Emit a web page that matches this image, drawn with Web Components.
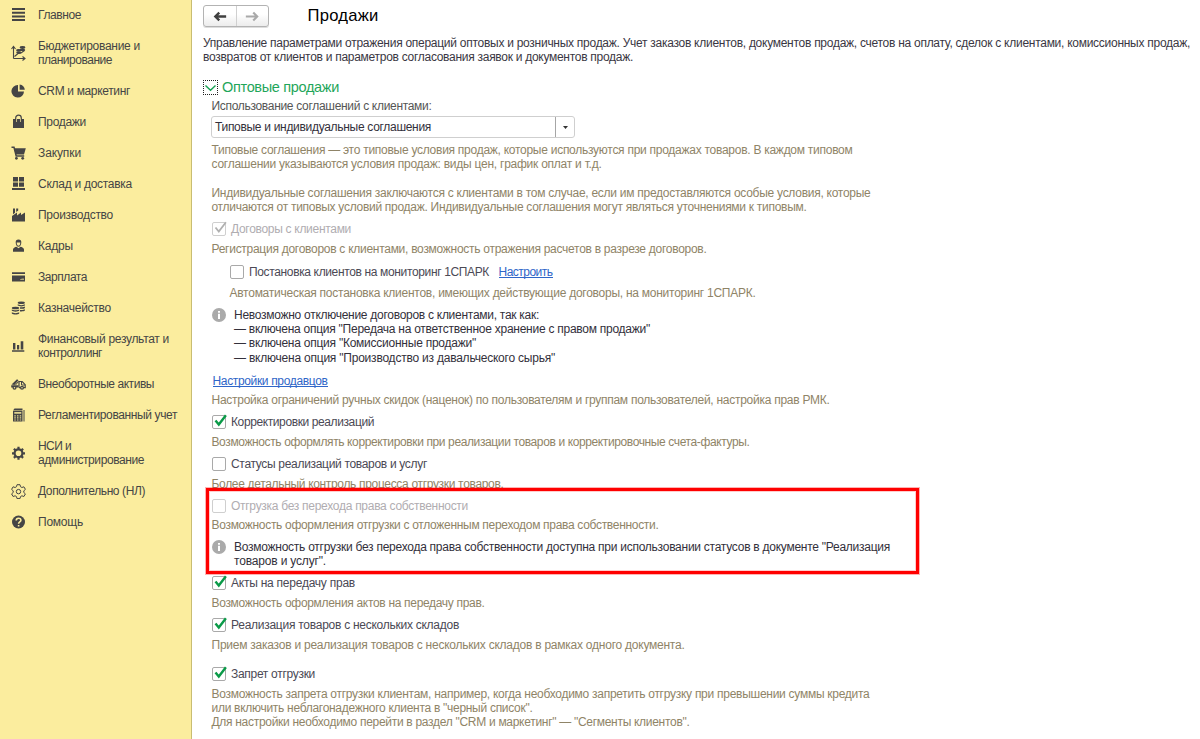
<!DOCTYPE html>
<html lang="ru">
<head>
<meta charset="UTF-8">
<title>Продажи</title>
<style>
    body {
        margin: 0;
        background: #fff;
        color: #3a3743;
        font: 12px/14.2px "Liberation Sans", Arial, sans-serif;
    }
</style>
</head>
<body>
<app-shell>
    <side-menu slot="menu">
        <menu-item icon="list"><fit-text w="43">Главное</fit-text></menu-item>
        <menu-item icon="budget"><fit-text w="102">Бюджетирование и</fit-text><fit-text w="74">планирование</fit-text></menu-item>
        <menu-item icon="pie"><fit-text w="92">CRM и маркетинг</fit-text></menu-item>
        <menu-item icon="bag"><fit-text w="48">Продажи</fit-text></menu-item>
        <menu-item icon="cart"><fit-text w="43">Закупки</fit-text></menu-item>
        <menu-item icon="store"><fit-text w="94">Склад и доставка</fit-text></menu-item>
        <menu-item icon="factory"><fit-text w="75">Производство</fit-text></menu-item>
        <menu-item icon="person"><fit-text w="35">Кадры</fit-text></menu-item>
        <menu-item icon="card"><fit-text w="49">Зарплата</fit-text></menu-item>
        <menu-item icon="coins"><fit-text w="73">Казначейство</fit-text></menu-item>
        <menu-item icon="bars"><fit-text w="131">Финансовый результат и</fit-text><fit-text w="64">контроллинг</fit-text></menu-item>
        <menu-item icon="truck"><fit-text w="116">Внеоборотные активы</fit-text></menu-item>
        <menu-item icon="calc"><fit-text w="139">Регламентированный учет</fit-text></menu-item>
        <menu-item icon="gear"><fit-text w="33">НСИ и</fit-text><fit-text w="106">администрирование</fit-text></menu-item>
        <menu-item icon="gear-line"><fit-text w="107">Дополнительно (НЛ)</fit-text></menu-item>
        <menu-item icon="help"><fit-text w="45">Помощь</fit-text></menu-item>
    </side-menu>

    <page-header><fit-text w="71">Продажи</fit-text></page-header>
    <text-block style="--gap: 9px; --indent: 0px">
        <fit-text w="987">Управление параметрами отражения операций оптовых и розничных продаж. Учет заказов клиентов, документов продаж, счетов на оплату, сделок с клиентами, комиссионных продаж,</fit-text>
        <fit-text w="430">возвратов от клиентов и параметров согласования заявок и документов продаж.</fit-text>
    </text-block>
    <group-title><fit-text w="117">Оптовые продажи</fit-text></group-title>
    <text-block style="--gap: 3.5px; color: #555">
        <fit-text w="220">Использование соглашений с клиентами:</fit-text>
    </text-block>
    <combo-box><fit-text w="216">Типовые и индивидуальные соглашения</fit-text></combo-box>
    <text-block hint style="--gap: 5px">
        <fit-text w="641">Типовые соглашения — это типовые условия продаж, которые используются при продажах товаров. В каждом типовом</fit-text>
        <fit-text w="390">соглашении указываются условия продаж: виды цен, график оплат и т.д.</fit-text>
    </text-block>
    <text-block hint style="--gap: 14.2px">
        <fit-text w="659">Индивидуальные соглашения заключаются с клиентами в том случае, если им предоставляются особые условия, которые</fit-text>
        <fit-text w="595">отличаются от типовых условий продаж. Индивидуальные соглашения могут являться уточнениями к типовым.</fit-text>
    </text-block>
    <check-option checked disabled><fit-text w="120">Договоры с клиентами</fit-text></check-option>
    <text-block hint><fit-text w="495">Регистрация договоров с клиентами, возможность отражения расчетов в разрезе договоров.</fit-text></text-block>
    <check-option style="--gap: 9px; --indent: 27px">
        <fit-text w="240">Постановка клиентов на мониторинг 1СПАРК</fit-text>
        <text-link slot="extra"><fit-text w="54">Настроить</fit-text></text-link>
    </check-option>
    <text-block hint style="--gap: 7px; --indent: 26.5px"><fit-text w="526">Автоматическая постановка клиентов, имеющих действующие договоры, на мониторинг 1СПАРК.</fit-text></text-block>
    <info-note>
        <fit-text w="305">Невозможно отключение договоров с клиентами, так как:</fit-text>
        <fit-text w="416">— включена опция "Передача на ответственное хранение с правом продажи"</fit-text>
        <fit-text w="242">— включена опция "Комиссионные продажи"</fit-text>
        <fit-text w="321">— включена опция "Производство из давальческого сырья"</fit-text>
    </info-note>
    <text-block style="--gap: 9.2px; --indent: 9.5px"><text-link><fit-text w="115">Настройки продавцов</fit-text></text-link></text-block>
    <text-block hint style="--gap: 5.2px"><fit-text w="618">Настройка ограничений ручных скидок (наценок) по пользователям и группам пользователей, настройка прав РМК.</fit-text></text-block>
    <check-option checked><fit-text w="143">Корректировки реализаций</fit-text></check-option>
    <text-block hint><fit-text w="538">Возможность оформлять корректировки при реализации товаров и корректировочные счета-фактуры.</fit-text></text-block>
    <check-option><fit-text w="196">Статусы реализаций товаров и услуг</fit-text></check-option>
    <text-block hint><fit-text w="292">Более детальный контроль процесса отгрузки товаров.</fit-text></text-block>
    <highlight-area>
        <check-option disabled><fit-text w="237">Отгрузка без перехода права собственности</fit-text></check-option>
        <text-block hint style="--gap: 5px"><fit-text w="447">Возможность оформления отгрузки с отложенным переходом права собственности.</fit-text></text-block>
        <info-note>
            <fit-text w="656">Возможность отгрузки без перехода права собственности доступна при использовании статусов в документе "Реализация</fit-text>
            <fit-text w="92">товаров и услуг".</fit-text>
        </info-note>
    </highlight-area>
    <check-option checked style="--gap: 8px"><fit-text w="124">Акты на передачу прав</fit-text></check-option>
    <text-block hint><fit-text w="273">Возможность оформления актов на передачу прав.</fit-text></text-block>
    <check-option checked><fit-text w="228">Реализация товаров с нескольких складов</fit-text></check-option>
    <text-block hint><fit-text w="473">Прием заказов и реализация товаров с нескольких складов в рамках одного документа.</fit-text></text-block>
    <check-option checked style="--gap: 14.8px"><fit-text w="84">Запрет отгрузки</fit-text></check-option>
    <text-block hint>
        <fit-text w="658">Возможность запрета отгрузки клиентам, например, когда необходимо запретить отгрузку при превышении суммы кредита</fit-text>
        <fit-text w="321">или включить неблагонадежного клиента в "черный список".</fit-text>
        <fit-text w="478">Для настройки необходимо перейти в раздел "CRM и маркетинг" — "Сегменты клиентов".</fit-text>
    </text-block>
</app-shell>

<script>
// 16x16 section icons
const ICONS = {
    list: `<path d="M2 1h13v2H2zM2 4.700h13v2H2zM2 8.400h13v2H2zM2 12.100h13v2H2z"/>`,
    budget: `<path d="M3.500 13.500V1.500M1.500 4l2-2.500 2 2.500M3.500 13.500h11M12.500 11.500l2.500 2-2.500 2M4.500 11.500l3.500-3 3-.5 3.500-2.500" fill="none" stroke="currentColor" stroke-width="1.100"/><ellipse cx="12.500" cy="2.500" rx="2.900" ry="1.400"/><ellipse cx="12.300" cy="4.900" rx="2.900" ry="1.200"/><ellipse cx="8.700" cy="5.300" rx="2.600" ry="1.300"/><ellipse cx="8.700" cy="7.500" rx="2.500" ry="1.200"/>`,
    pie: `<path d="M8 2v6.500h6A6.300 6.300 0 1 1 8 2z"/><path d="M9.600 1.500a6 6 0 0 1 5.200 5.300H9.600z"/>`,
    bag: `<path d="M3 5h11v9H3z"/><path d="M5.700 7.500V4a2.800 2.800 0 0 1 5.600 0v3.500" fill="none" stroke="currentColor" stroke-width="1.200"/><path d="M6.500 5v3M10.500 5v3" stroke="#fbed9e" stroke-width=".7"/>`,
    cart: `<path d="M1.500 2.300h2.500l2.200 8.700h8" fill="none" stroke="currentColor" stroke-width="1.500"/><path d="M4 3.300H15.800L14 9.500H5.700z"/><circle cx="6.400" cy="13.300" r="1.400"/><circle cx="12.700" cy="13.300" r="1.400"/>`,
    store: `<path d="M3 1h5v4.600H3zM9 1h5v4.600H9zM3 6.400h5v4.300H3zM9 6.400h5v4.300H9zM2 12h13v2H2z"/>`,
    factory: `<path d="M2 14.500V9l5-3.500V8.500l4-3V8l4-2.500v9zM3 1.500h2v4.300l-2 1.400zM6.200 1.500h2v2l-2 1.500z"/>`,
    person: `<path d="M8.500 1.500a2.800 2.800 0 0 1 2.800 3c0 2-1.200 4.300-2.800 4.300S5.700 6.500 5.700 4.500a2.800 2.800 0 0 1 2.800-3zM3 13.800v-2.300c0-1.600 2-2.300 3.500-2.700l2 1.500 2-1.500c1.500.4 3.500 1.100 3.500 2.700v2.300z"/><path d="M6.700 4.500h3.600c0 2-.9 3.300-1.800 3.300S6.700 6.500 6.700 4.500z" fill="#fbed9e"/>`,
    card: `<path d="M2 3.200h13v1.800H2zM2 6.500h13v6H2z"/><path d="M10 10.500l2-1h2v1.500h-4z" fill="#fbed9e" opacity=".6"/>`,
    coins: `<ellipse cx="11.300" cy="2.800" rx="3.600" ry="1.300"/><path d="M7.700 4.300c1.200 1.100 6 1.100 7.200 0v1.300c-1.200 1.100-6 1.100-7.200 0zM10 7.300c1.500.2 4 0 4.900-.7v1.300c-.9.800-3 1-4.900.8zM10 10c1.500.2 4 0 4.900-.7v1.300c-.9.800-3 1-4.900.8z"/><ellipse cx="5.500" cy="8" rx="3.700" ry="1.300"/><path d="M1.800 9.500c1.200 1.100 6.200 1.100 7.400 0v1.300c-1.200 1.100-6.200 1.100-7.400 0zM1.800 12.300c1.200 1.100 6.200 1.100 7.400 0v1.300c-1.200 1.300-6.200 1.300-7.400 0z"/>`,
    bars: `<path d="M3 5h2.400v6.500H3zM7 7h2.200v4.500H7zM10.700 3.300h2.600v8.200h-2.600zM2 12.200h12.300v1.600H2z"/>`,
    truck: `<path d="M1.500 8.500L7 3.300l1.500 1-4 4.700zM1.200 9.300h7.300v2.200H1.200z"/><path d="M9 11.500V5.500h3.200l3 3.200v3H9" fill="none" stroke="currentColor" stroke-width="1.200"/><path d="M11.500 6v3h3.500M5.500 9l3-3.500" fill="none" stroke="currentColor"/><g fill="#fbed9e" stroke="currentColor" stroke-width="1.300"><circle cx="4.500" cy="11.800" r="1.400"/><circle cx="12" cy="11.800" r="1.400"/></g>`,
    calc: `<path d="M3 3.500L4.500 1.500h8v2zM3 4h9.500v10.500H3z"/><path d="M14 3v11.500" stroke="currentColor"/><path d="M4.300 5h7v1.800h-7zM4.300 8.200h1.500v1.200H4.300zM7 8.200h1.500v1.200H7zM9.700 8.200h1.500v1.200H9.700zM4.300 10.300h1.500v1.200H4.300zM7 10.300h1.500v1.200H7zM9.700 10.300h1.500v1.200H9.700zM4.300 12.400h1.500v1H4.300zM7 12.400h1.500v1H7zM9.700 12.400h1.500v1H9.700z" fill="#fbed9e" opacity=".85"/>`,
    gear: `<circle cx="8.500" cy="8.300" r="3.900" fill="none" stroke="currentColor" stroke-width="2.200"/><path d="M8.500 1.800v2.700M8.500 12.100v2.700M2 8.300h2.700M12.300 8.300H15M3.900 3.700l1.900 1.900M11.200 11l1.900 1.900M3.900 12.900L5.800 11M11.200 5.600l1.900-1.900" stroke="currentColor" stroke-width="2.200"/>`,
    "gear-line": `<path d="M7 1.700h3l.5 2 1.400.8 2-.7 1.500 2.600-1.600 1.400v1.700l1.600 1.400-1.500 2.600-2-.7-1.400.8-.5 2H7l-.5-2-1.400-.8-2 .7-1.500-2.600 1.600-1.400V7.800L1.600 6.400l1.500-2.600 2 .7 1.400-.8z" fill="none" stroke="currentColor" stroke-linejoin="round"/><circle cx="8.500" cy="8.600" r="2.200" fill="none" stroke="currentColor"/>`,
    help: `<circle cx="8.500" cy="8" r="6.500"/><path d="M6.200 6.500c0-3 4.700-3 4.700-.3 0 1.800-2.300 1.700-2.300 3.500M8.600 10.900v1.700" fill="none" stroke="#fbed9e" stroke-width="1.600"/>`
};

class BaseElement extends HTMLElement {
    constructor() {
        super();
        this.attachShadow({ mode: "open" });
    }

    connectedCallback() {
        this.shadowRoot.innerHTML = this.template();
    }
}

/**
 * One line of text, tracked so that it takes exactly "w" pixels
 */
class FitText extends BaseElement {
    template() {
        return `
            <style>
                :host { display: block; white-space: nowrap; }
                span { display: inline-block; text-decoration: inherit; }
            </style>
            <span><slot></slot></span>
        `;
    }

    connectedCallback() {
        super.connectedCallback();
        const span = this.shadowRoot.querySelector("span");
        const width = Number(this.getAttribute("w"));
        const natural = span.getBoundingClientRect().width;
        if (width && natural) {
            span.style.letterSpacing = `${(width - natural) / this.textContent.length}px`;
        }
    }
}

class AppShell extends BaseElement {
    template() {
        return `
            <style>
                :host { display: flex; height: 739px; overflow: hidden; }
                main { flex: 1; min-width: 0; padding: 5px 0 0 11px; }
            </style>
            <slot name="menu"></slot>
            <main><slot></slot></main>
        `;
    }
}

class SideMenu extends BaseElement {
    template() {
        return `
            <style>
                :host {
                    display: flex;
                    flex-direction: column;
                    flex: none;
                    box-sizing: border-box;
                    width: 192px;
                    background: #fbed9e;
                    border-right: 1px solid #c9bd72;
                    color: #454545;
                }
            </style>
            <slot></slot>
        `;
    }
}

class MenuItem extends BaseElement {
    template() {
        return `
            <style>
                :host { display: flex; align-items: center; gap: 12px; padding: 8.4px 0 8.4px 10px; }
                :host(:first-child) { padding-top: 7.9px; }
                svg { display: block; flex: none; margin: -1px 0; color: #454545; fill: currentColor; }
            </style>
            <svg width="16" height="16" viewBox="0 0 16 16">${ICONS[this.getAttribute("icon")]}</svg>
            <div><slot></slot></div>
        `;
    }
}

class PageHeader extends BaseElement {
    template() {
        return `
            <style>
                :host { display: flex; align-items: center; gap: 38.5px; height: 22px; }
                .nav {
                    display: flex;
                    box-sizing: border-box;
                    width: 66px;
                    height: 22px;
                    border: 1px solid #b3b3b3;
                    border-radius: 3px;
                    background: linear-gradient(#fff 40%, #ececec);
                    box-shadow: 0 1px 0 #ddd;
                }
                .nav svg { flex: 1; width: 32px; height: 20px; }
                .nav svg + svg { border-left: 1px solid #d0d0d0; }
                h1 { margin: 0; font-size: 16.6px; line-height: 20px; font-weight: 400; color: #000; }
            </style>
            <div class="nav">
                <svg viewBox="0 0 32 20"><path d="M22.500 10.500H11.500M15.500 6.500l-4 4 4 4" fill="none" stroke="#404040" stroke-width="2.400"/></svg>
                <svg viewBox="0 0 32 20"><path d="M9 10.500h11.500M16.500 6.500l4 4-4 4" fill="none" stroke="#a9a9a9" stroke-width="2.200"/></svg>
            </div>
            <h1><slot></slot></h1>
        `;
    }
}

class GroupTitle extends BaseElement {
    template() {
        return `
            <style>
                :host { display: flex; align-items: center; gap: 4px; height: 16px; margin-top: 15px; color: #1fa65a; font-size: 14.5px; line-height: 16px; }
                .toggle { display: grid; place-items: center; box-sizing: border-box; width: 15px; height: 15px; border: 1px dotted #222; }
                svg { display: block; }
            </style>
            <div class="toggle">
                <svg width="13" height="13" viewBox="0 0 13 13" fill="none">
                    <path d="M1.500 4.500l5 4.800 5-4.800" stroke="#14a050" stroke-width="1.400"/>
                </svg>
            </div>
            <slot></slot>
        `;
    }
}

class TextBlock extends BaseElement {
    template() {
        return `
            <style>
                :host { display: block; margin: var(--gap, 5.7px) 0 0 var(--indent, 8.5px); }
                :host([hint]) { color: #8f8467; }
            </style>
            <slot></slot>
        `;
    }
}

class ComboBox extends BaseElement {
    template() {
        return `
            <style>
                :host {
                    display: flex;
                    align-items: center;
                    box-sizing: border-box;
                    width: 364px;
                    height: 22px;
                    margin: 3px 0 0 8px;
                    border: 1px solid #cfcfcf;
                    border-radius: 3px;
                }
                .value { flex: 1; padding-left: 3px; color: #33303b; }
                .drop { display: grid; place-items: center; width: 18px; height: 20px; border-left: 1px solid #a6a6a6; }
            </style>
            <div class="value"><slot></slot></div>
            <div class="drop"><svg width="5" height="3" viewBox="0 0 5 3"><path d="M0 0h5L2.500 3z" fill="#333"/></svg></div>
        `;
    }
}

class CheckOption extends BaseElement {
    template() {
        const disabled = this.hasAttribute("disabled");
        const mark = disabled ? "#b0b0b0" : "#0a9a48";
        return `
            <style>
                :host { display: flex; align-items: center; gap: 4px; height: 14px; margin: var(--gap, 7.9px) 0 0 var(--indent, 9px); color: #4b4955; }
                :host([disabled]) { color: #b0adb1; }
                svg { display: block; flex: none; overflow: visible; }
                ::slotted([slot="extra"]) { margin-left: 5.5px; }
            </style>
            <svg width="15" height="14" viewBox="0 0 15 14" fill="none">
                <rect x=".5" y=".5" width="13" height="13" rx="1.500" fill="#fff" stroke="${disabled ? "#cfcfcf" : "#a9a9a9"}"/>
                ${this.hasAttribute("checked") ? `<path d="M3.500 5.500l3.300 4L13.900.3" stroke="${mark}" stroke-width="${disabled ? 1.8 : 2.4}"/>` : ""}
            </svg>
            <slot></slot>
            <slot name="extra"></slot>
        `;
    }
}

class TextLink extends BaseElement {
    template() {
        return `
            <style>
                :host { display: block; width: fit-content; color: #2f66c8; }
                div { background: linear-gradient(currentColor, currentColor) 0 12px / 100% 1px no-repeat; }
            </style>
            <div><slot></slot></div>
        `;
    }
}

class InfoNote extends BaseElement {
    template() {
        return `
            <style>
                :host { display: flex; gap: 8.5px; margin: 7.8px 0 0 8.5px; color: #33303b; }
                svg { display: block; flex: none; }
            </style>
            <svg width="14" height="14" viewBox="0 0 14 14">
                <circle cx="7" cy="7" r="7" fill="#aaa"/>
                <path d="M6 3h2v1.700H6zM6 5.800h2V11H6z" fill="#fff"/>
            </svg>
            <div><slot></slot></div>
        `;
    }
}

class HighlightArea extends BaseElement {
    template() {
        return `
            <style>
                :host { display: flow-root; position: relative; }
                .frame {
                    position: absolute;
                    left: 3px;
                    top: -3.2px;
                    box-sizing: border-box;
                    width: 713px;
                    height: 86px;
                    border: 3px solid #f00;
                    box-shadow: 0 0 0 1px rgba(255, 0, 0, .3), inset 0 0 0 1px rgba(255, 0, 0, .2);
                }
            </style>
            <slot></slot>
            <div class="frame"></div>
        `;
    }
}

customElements.define("app-shell", AppShell);
customElements.define("side-menu", SideMenu);
customElements.define("menu-item", MenuItem);
customElements.define("page-header", PageHeader);
customElements.define("group-title", GroupTitle);
customElements.define("text-block", TextBlock);
customElements.define("combo-box", ComboBox);
customElements.define("check-option", CheckOption);
customElements.define("text-link", TextLink);
customElements.define("info-note", InfoNote);
customElements.define("highlight-area", HighlightArea);
// last, so that every host already has its own font size when the line is measured
customElements.define("fit-text", FitText);
</script>
</body>
</html>
